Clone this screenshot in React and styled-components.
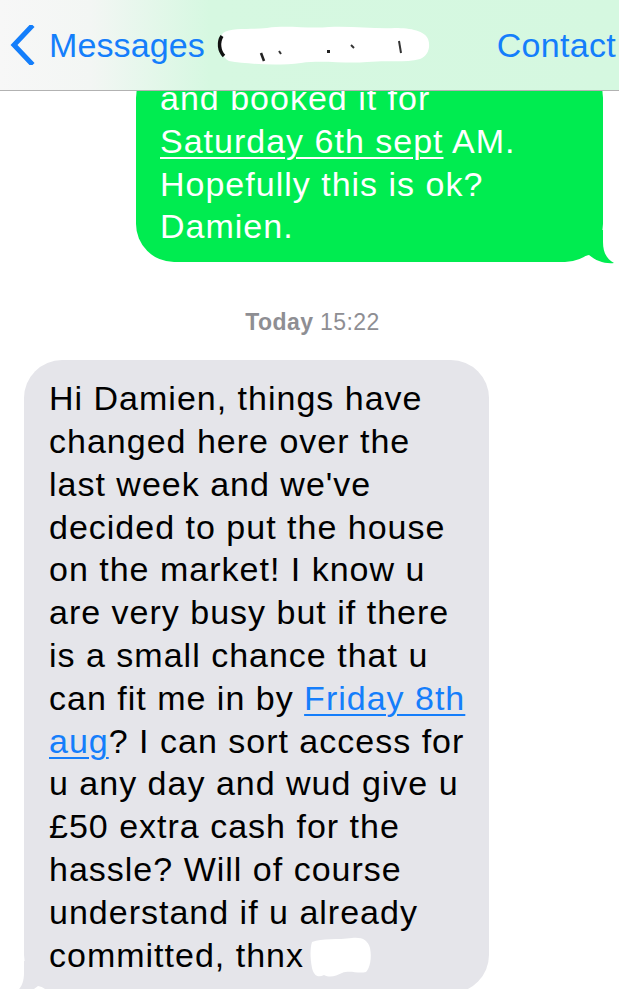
import React from 'react';
import styled, { createGlobalStyle } from 'styled-components';

const GlobalStyle = createGlobalStyle`
  html, body {
    margin: 0;
    padding: 0;
    background: #fff;
    overflow: hidden;
  }
  body {
    font-family: "Liberation Sans", Arial, sans-serif;
    -webkit-font-smoothing: antialiased;
  }
`;

const Screen = styled.div`
  position: relative;
  width: 619px;
  height: 989px;
  overflow: hidden;
  background: #fff;
`;

const NavBar = styled.div`
  position: absolute;
  top: 0;
  left: 0;
  right: 0;
  z-index: 10;
  height: 90px;
  border-bottom: 1px solid #b2b2b2;
  background: linear-gradient(90deg, #f7f7f7 0px, #f3f6f4 90px, #d6f8e1 210px, #d5f8e0 100%);
  display: flex;
  align-items: center;
  padding-left: 9px;
  white-space: nowrap;
`;

const BackButton = styled.div`
  display: flex;
  align-items: center;
  gap: 14px;
  color: #147efb;
  font-size: 34px;
  letter-spacing: 0.1px;
`;

const Title = styled.div`
  margin-left: 12px;
  display: flex;
  align-items: center;
`;

const NavAction = styled.div`
  margin-left: auto;
  margin-right: 3px;
  color: #147efb;
  font-size: 34px;
  letter-spacing: 0.3px;
`;

const Thread = styled.div`
  display: flex;
  flex-direction: column;
  padding-top: 60px;
`;

const Bubble = styled.div`
  position: relative;
  box-sizing: border-box;
  width: ${p => p.$width}px;
  padding: ${p => p.$pad};
  border-radius: 38px;
  background: ${p => (p.$sent ? '#00ec50' : '#e5e5ea')};
  color: ${p => (p.$sent ? '#fff' : '#000')};
  align-self: ${p => (p.$sent ? 'flex-end' : 'flex-start')};
  margin: ${p => (p.$sent ? '0 16px 0 0' : '0 0 0 24px')};
  font-size: 34px;
  line-height: 42.8px;
  letter-spacing: 1px;
  white-space: nowrap;
`;

const Tail = styled.svg`
  position: absolute;
  bottom: -2px;
  width: 30px;
  height: 34px;
  ${p => (p.$sent ? 'right: -12px;' : 'left: -12px; transform: scaleX(-1);')}
`;

const Link = styled.span`
  text-decoration: underline;
  text-decoration-thickness: 2px;
  text-underline-offset: 4px;
  color: ${p => (p.$light ? '#fff' : '#157efb')};
`;

const Stamp = styled.div`
  align-self: center;
  margin: 48px 0 26px 6px;
  color: #8e8e93;
  font-size: 23px;
  line-height: 24px;
  letter-spacing: 0.4px;

  b {
    font-weight: 700;
  }
`;

const Blot = styled.svg`
  display: inline-block;
  vertical-align: middle;
  margin-left: 4px;
`;

const Chevron = () => (
  <svg width="26" height="40" viewBox="0 0 26 40">
    <path d="M22 2 L5 20 L22 38" fill="none" stroke="#147efb" strokeWidth="5" strokeLinecap="square" />
  </svg>
);

const TailShape = ({ sent }) => (
  <Tail $sent={sent} viewBox="0 0 30 34">
    <path
      d="M0 0 L18 0 L18 12 C18 23 22 29 29 33 C20 34 11 31 4 25 L0 26 Z"
      fill={sent ? '#00ec50' : '#e5e5ea'}
    />
  </Tail>
);

const NameBlot = () => (
  <svg width="216" height="44" viewBox="0 0 216 44">
    <path
      d="M6 10 C14 4 34 7 50 5 C70 2 92 6 112 4 C136 3 158 6 178 5 C194 5 208 8 211 16 C214 24 211 33 203 36 C188 40 170 37 150 39 C128 41 106 37 84 40 C60 43 30 41 12 38 C3 34 0 18 6 10 Z"
      fill="#fff"
    />
    <path d="M5 13 C1 19 2 28 7 33" stroke="#111" strokeWidth="3.5" fill="none" />
    <path d="M44 30 l3 8" stroke="#222" strokeWidth="2.5" />
    <path d="M62 28 l2 3" stroke="#333" strokeWidth="2" />
    <rect x="110" y="27" width="3" height="3" fill="#222" />
    <path d="M134 22 l3 3" stroke="#333" strokeWidth="2" />
    <path d="M182 18 l2 12" stroke="#333" strokeWidth="2" />
  </svg>
);

const SignBlot = () => (
  <Blot width="66" height="44" viewBox="0 0 66 44">
    <path
      d="M4 6 C14 2 30 4 44 2 C54 1 60 4 62 12 C64 22 62 32 58 36 C50 38 42 34 34 37 C28 40 22 42 16 39 C10 42 6 40 4 32 C2 22 2 12 4 6 Z"
      fill="#fff"
    />
  </Blot>
);

export default function App() {
  return (
    <Screen>
      <GlobalStyle />
      <NavBar>
        <BackButton>
          <Chevron />
          <span>Messages</span>
        </BackButton>
        <Title>
          <NameBlot />
        </Title>
        <NavAction>Contact</NavAction>
      </NavBar>

      <Thread>
        <Bubble $sent $width={467} $pad="17px 24px 14px 24px">
          and booked it for<br />
          <Link $light>Saturday 6th sept</Link> AM.<br />
          Hopefully this is ok?<br />
          Damien.
          <TailShape sent />
        </Bubble>

        <Stamp>
          <b>Today</b> 15:22
        </Stamp>

        <Bubble $width={465} $pad="17px 25px 13px 25px">
          Hi Damien, things have<br />
          changed here over the<br />
          last week and we've<br />
          decided to put the house<br />
          on the market! I know u<br />
          are very busy but if there<br />
          is a small chance that u<br />
          can fit me in by <Link>Friday 8th</Link><br />
          <Link>aug</Link>? I can sort access for<br />
          u any day and wud give u<br />
          £50 extra cash for the<br />
          hassle? Will of course<br />
          understand if u already<br />
          committed, thnx<SignBlot />
          <TailShape />
        </Bubble>
      </Thread>
    </Screen>
  );
}
